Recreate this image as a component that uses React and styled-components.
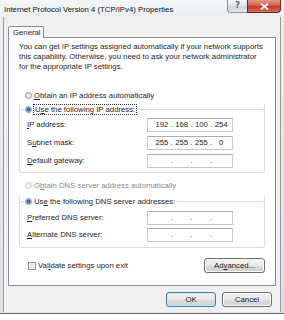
import React from 'react';
import styled, {createGlobalStyle} from 'styled-components';

const Global = createGlobalStyle`
  html, body {
    margin: 0;
    padding: 0;
    background: #ffffff;
  }
  body {
    font-family: "Liberation Sans", Arial, sans-serif;
    font-size: 7.75px;
    color: #1e1e1e;
  }
`;

const Window = styled.div`
  width: 284px;
  height: 314px;
  display: flex;
  flex-direction: column;
  background: linear-gradient(180deg, #eef1f4 0%, #dcdfe3 100%);
  border-bottom: 1px solid #6b6b6b;
  box-sizing: border-box;
`;

const TitleBar = styled.div`
  height: 17px;
  display: flex;
  align-items: flex-start;
  padding-left: 4px;
  background: linear-gradient(180deg, #f4f5f6 0%, #eceef0 100%);
`;

const Title = styled.div`
  padding-top: 5px;
  line-height: 9px;
  color: #111;
  white-space: nowrap;
`;

const Caption = styled.div`
  margin-left: auto;
  margin-right: 3px;
  display: flex;
  flex: none;
`;

const HelpButton = styled.div`
  flex: none;
  width: 20px;
  height: 13px;
  box-sizing: border-box;
  display: flex;
  align-items: center;
  justify-content: center;
  border: 1px solid #8e97a2;
  border-top: none;
  border-right: none;
  border-radius: 0 0 0 4px;
  background: linear-gradient(180deg, #f3f5f7 0%, #e1e5ea 45%, #cfd6de 55%, #e3e8ed 100%);
  color: #5a6470;
  font-family: "DejaVu Sans", sans-serif;
  font-size: 8px;
  font-weight: bold;
  line-height: 1;
`;

const CloseButton = styled.div`
  flex: none;
  width: 34px;
  height: 13px;
  box-sizing: border-box;
  display: flex;
  align-items: center;
  justify-content: center;
  border: 1px solid #6e2a20;
  border-top: none;
  border-radius: 0 0 4px 0;
  background-color: #c9452f;
  background-image: linear-gradient(180deg, #e39585 0%, #d3624c 45%, #c13a23 55%, #d4705a 100%);
`;

const Body = styled.div`
  flex: 1;
  margin: 0 3px 1px 3px;
  border-left: 1px solid #9a9a9a;
  border-right: 1px solid #9a9a9a;
  background: #f0f0f0;
  padding: 9px 4px 0 4px;
  display: flex;
  flex-direction: column;
`;

const Tab = styled.div`
  width: 36px;
  height: 12px;
  box-sizing: border-box;
  background: #ffffff;
  border: 1px solid #898c95;
  border-bottom: none;
  border-radius: 2px 2px 0 0;
  padding: 1px 0 0 4px;
  line-height: 9px;
  position: relative;
  z-index: 1;
  margin-bottom: -1px;
`;

const Panel = styled.div`
  width: 268px;
  height: 249px;
  box-sizing: border-box;
  background: #ffffff;
  border: 1px solid #898c95;
  padding: 4px 10px 0 10px;
  display: flex;
  flex-direction: column;
`;

const Intro = styled.p`
  margin: 0;
  line-height: 10px;
  white-space: nowrap;
  span {
    display: block;
  }
`;

const OptionRow = styled.div`
  display: flex;
  align-items: center;
  height: 10px;
  padding-left: ${p => p.$indent ?? 6}px;
  margin-top: ${p => p.$top ?? 0}px;
  color: ${p => (p.$disabled ? '#8a8a8a' : 'inherit')};
  gap: 2px;
  white-space: nowrap;
`;

const Radio = styled.span`
  width: 7px;
  height: 7px;
  box-sizing: border-box;
  border-radius: 50%;
  border: 1px solid ${p => (p.$disabled ? '#c8c8c8' : '#8f8f8f')};
  background: ${p =>
    p.$checked
      ? 'radial-gradient(circle, #2b6fb8 0 1.6px, #8cc2ea 2.2px, #e9eef2 2.6px)'
      : p.$disabled
      ? '#f4f4f4'
      : 'linear-gradient(135deg, #dcdcdc, #fbfbfb)'};
  flex: none;
`;

const Check = styled.span`
  width: 8px;
  height: 8px;
  box-sizing: border-box;
  border: 1px solid #8f8f8f;
  background: linear-gradient(135deg, #dcdcdc, #fbfbfb);
  box-shadow: inset 0 0 0 1px #f6f6f6;
  flex: none;
`;

const Focus = styled.span`
  outline: 1px dotted #333;
  outline-offset: 0;
  padding: 0 1px;
`;

const Group = styled.div`
  margin-top: ${p => p.$top}px;
  border: 1px solid #d5dfe5;
  border-top: none;
  border-radius: 0 0 3px 3px;
  padding: 0 7px ${p => p.$bottom}px 7px;
  display: flex;
  flex-direction: column;
  gap: ${p => p.$gap}px;
`;

const GroupHead = styled.div`
  display: flex;
  align-items: center;
  height: 10px;
  margin: 0 -8px ${p => p.$after}px -8px;
  &::before,
  &::after {
    content: '';
    align-self: stretch;
    border-top: 1px solid #d5dfe5;
    margin-top: 5px;
  }
  &::before {
    width: 4px;
    border-left: 1px solid #d5dfe5;
    border-top-left-radius: 3px;
    margin-right: 1px;
  }
  &::after {
    flex: 1;
    border-right: 1px solid #d5dfe5;
    border-top-right-radius: 3px;
    margin-left: 1px;
  }
`;

const FieldRow = styled.div`
  display: flex;
  align-items: center;
  height: 14px;
`;

const FieldLabel = styled.label`
  width: 120px;
  flex: none;
  line-height: 10px;
  white-space: nowrap;
`;

const IpBox = styled.div`
  width: 86px;
  height: 14px;
  flex: none;
  box-sizing: border-box;
  border: 1px solid #c5c8cf;
  border-top-color: #abadb3;
  background: #ffffff;
  display: grid;
  grid-template-columns: 1fr 4px 1fr 4px 1fr 4px 1fr;
  align-items: center;
  text-align: center;
  padding: 0 3px 0 6px;
  color: #222;
  line-height: 12px;
`;

const BottomRow = styled.div`
  display: flex;
  align-items: center;
  justify-content: space-between;
  margin-top: 10px;
  padding-left: 9px;
`;

const CheckLabel = styled.label`
  display: flex;
  align-items: center;
  gap: 2px;
`;

const Button = styled.button`
  width: ${p => p.$w}px;
  height: 15px;
  box-sizing: border-box;
  padding: 0;
  font: inherit;
  color: #1e1e1e;
  line-height: 12px;
  border: 1px solid ${p => (p.$default ? '#3c7fb1' : '#707070')};
  border-radius: 3px;
  background: linear-gradient(180deg, #f2f2f2 0%, #ebebeb 48%, #dddddd 52%, #cfcfcf 100%);
  box-shadow: inset 0 0 0 1px ${p => (p.$default ? '#cde8f8' : '#fbfbfb')};
`;

const Footer = styled.div`
  display: flex;
  justify-content: flex-end;
  gap: 6px;
  margin-top: 6px;
  padding-right: 4px;
`;

const Ip = ({value}) => {
  const parts = value ? value.split('.') : ['', '', '', ''];
  return (
    <IpBox>
      <span>{parts[0]}</span>.<span>{parts[1]}</span>.<span>{parts[2]}</span>.<span>{parts[3]}</span>
    </IpBox>
  );
};

const Field = ({label, value}) => (
  <FieldRow>
    <FieldLabel>{label}</FieldLabel>
    <Ip value={value} />
  </FieldRow>
);

const App = () => {
  return (
    <>
      <Global />
      <Window>
        <TitleBar>
          <Title>Internet Protocol Version 4 (TCP/IPv4) Properties</Title>
          <Caption>
            <HelpButton>?</HelpButton>
            <CloseButton>
              <svg width="9" height="7" viewBox="0 0 9 7">
                <path d="M1 0.5 L8 6.5 M8 0.5 L1 6.5" stroke="#ffffff" strokeWidth="1.8" />
              </svg>
            </CloseButton>
          </Caption>
        </TitleBar>
        <Body>
          <Tab>General</Tab>
          <Panel>
            <Intro>
              <span>You can get IP settings assigned automatically if your network supports</span>
              <span>this capability. Otherwise, you need to ask your network administrator</span>
              <span>for the appropriate IP settings.</span>
            </Intro>

            <OptionRow $top={18}>
              <Radio />
              <span><u>O</u>btain an IP address automatically</span>
            </OptionRow>

            <Group $top={4} $gap={4} $bottom={4}>
              <GroupHead $after={0}>
                <OptionRow $indent={0}>
                  <Radio $checked />
                  <Focus>U<u>s</u>e the following IP address:</Focus>
                </OptionRow>
              </GroupHead>
              <Field label={<><u>I</u>P address:</>} value="192.168.100.254" />
              <Field label={<>S<u>u</u>bnet mask:</>} value="255.255.255.0" />
              <Field label={<><u>D</u>efault gateway:</>} />
            </Group>

            <OptionRow $top={7} $disabled>
              <Radio $disabled />
              <span>O<u>b</u>tain DNS server address automatically</span>
            </OptionRow>

            <Group $top={6} $gap={3} $bottom={5}>
              <GroupHead $after={2}>
                <OptionRow $indent={0}>
                  <Radio $checked />
                  <span>Us<u>e</u> the following DNS server addresses:</span>
                </OptionRow>
              </GroupHead>
              <Field label={<><u>P</u>referred DNS server:</>} />
              <Field label={<><u>A</u>lternate DNS server:</>} />
            </Group>

            <BottomRow>
              <CheckLabel>
                <Check />
                <span>Val<u>i</u>date settings upon exit</span>
              </CheckLabel>
              <Button $w={61}>Ad<u>v</u>anced...</Button>
            </BottomRow>
          </Panel>
          <Footer>
            <Button $w={50} $default>OK</Button>
            <Button $w={50}>Cancel</Button>
          </Footer>
        </Body>
      </Window>
    </>
  );
};

export default App;
